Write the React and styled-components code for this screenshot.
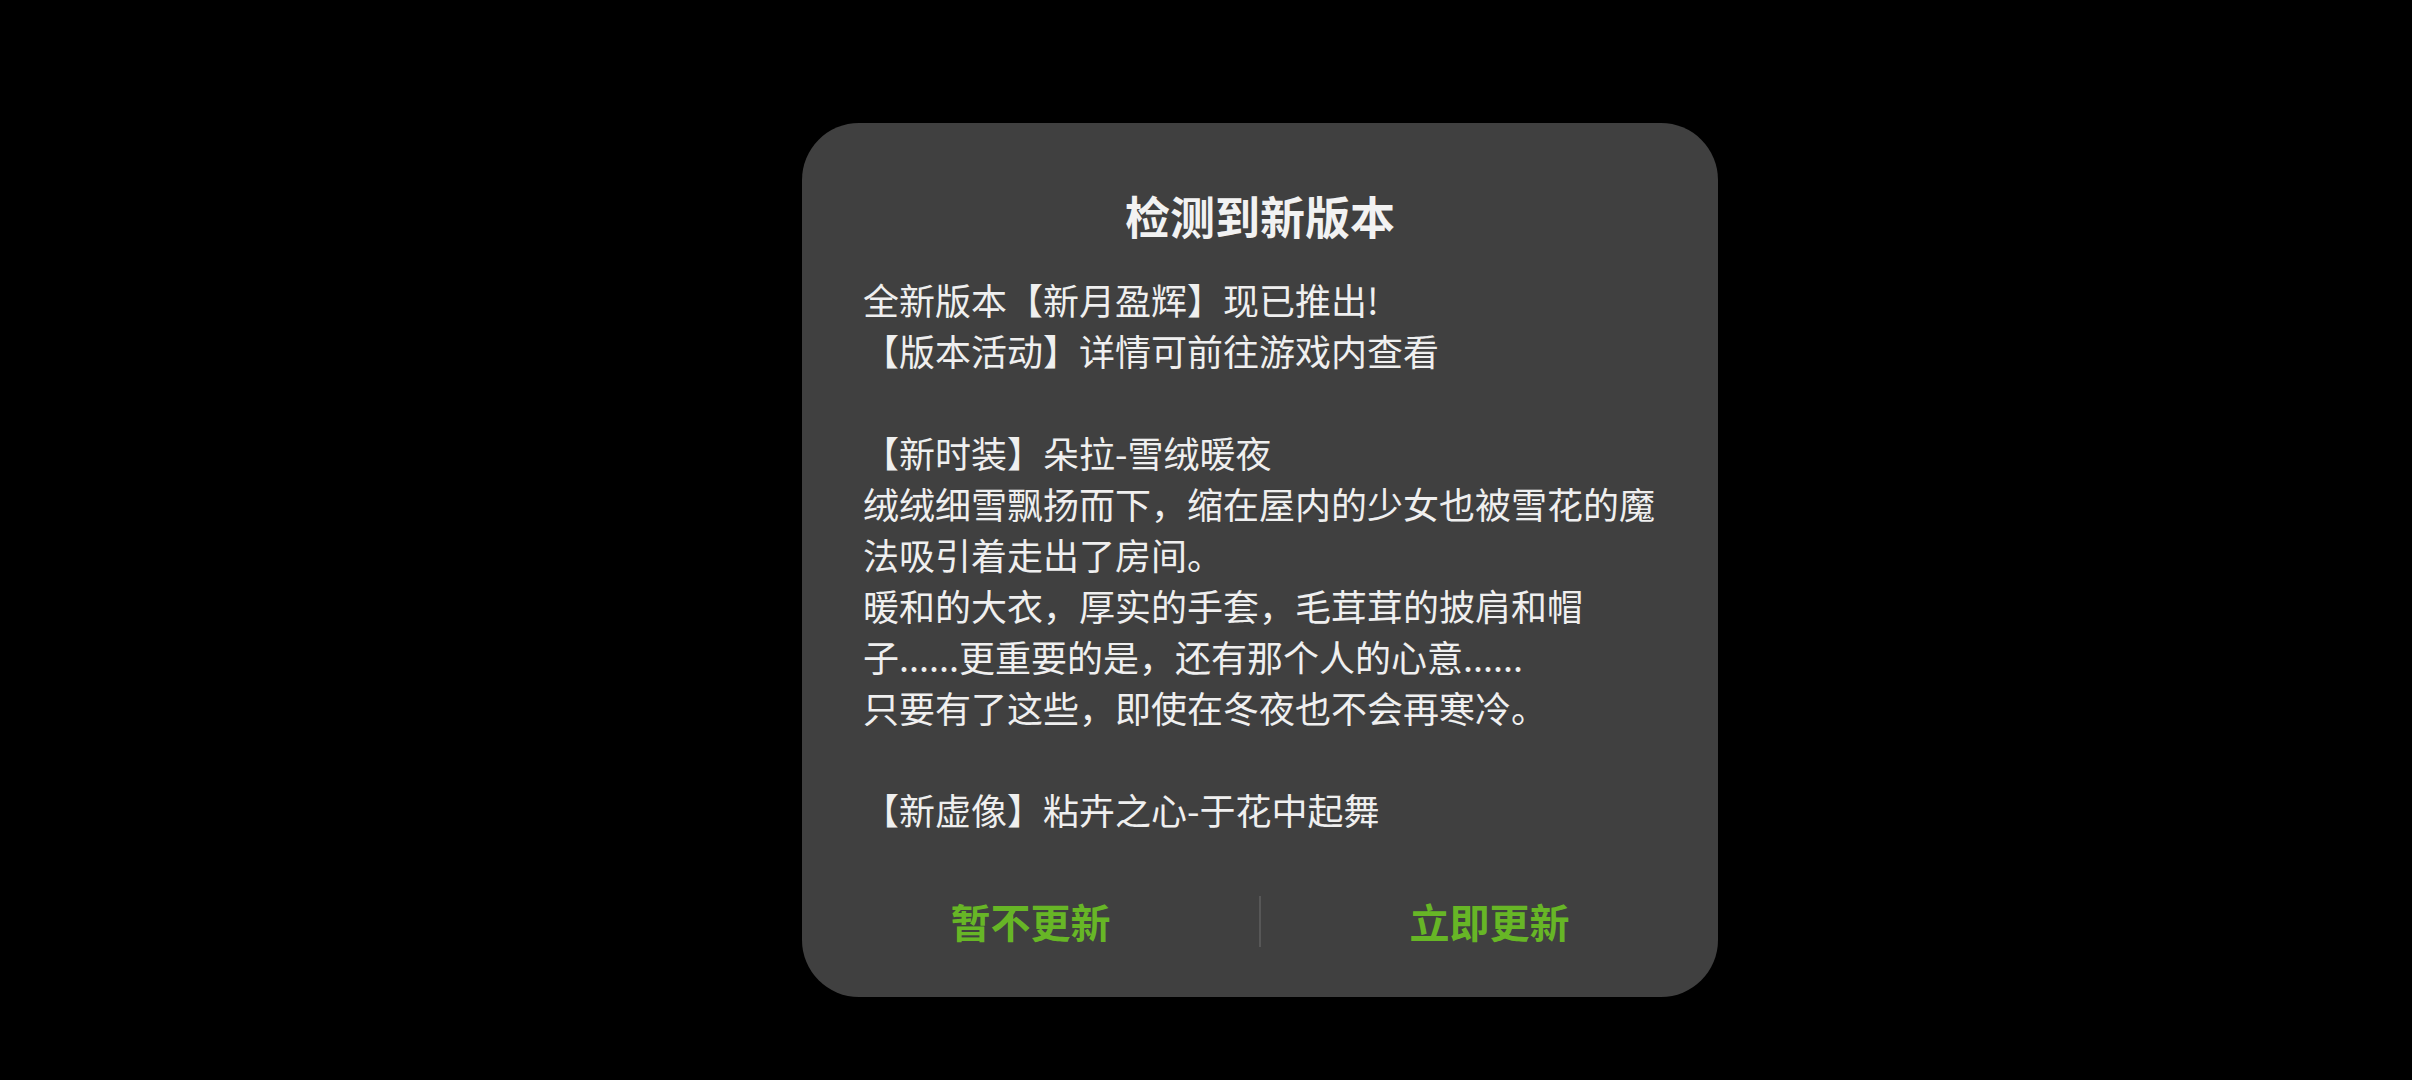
import React from "react";
import styled, { createGlobalStyle } from "styled-components";

const GlobalStyle = createGlobalStyle`
  html, body {
    margin: 0;
    padding: 0;
    background: #000;
  }
  body {
    font-family: "Noto Sans CJK SC", "Noto Sans", sans-serif;
  }
`;

const Page = styled.div`
  width: 2412px;
  height: 1080px;
  box-sizing: border-box;
  padding: 123px 0 0 802px;
  background: #000;
  overflow: hidden;
`;

const Dialog = styled.div`
  width: 916px;
  height: 874px;
  box-sizing: border-box;
  background: #404040;
  border-radius: 57px;
  padding: 63px 61px 26px;
  display: flex;
  flex-direction: column;
`;

const Title = styled.h1`
  margin: 0;
  font-size: 45px;
  line-height: 60px;
  font-weight: 700;
  color: #f2f2f2;
  text-align: center;
`;

const Body = styled.div`
  margin-top: 28px;
  display: flex;
  flex-direction: column;
`;

const Line = styled.div`
  height: 51px;
  line-height: 51px;
  font-size: 36px;
  color: #efefef;
  white-space: nowrap;
`;

const Actions = styled.div`
  margin: auto -61px 0;
  height: 100px;
  display: grid;
  grid-template-columns: 1fr 2px 1fr;
  align-items: center;
`;

const ActionButton = styled.button`
  background: none;
  border: none;
  padding: 0;
  height: 100%;
  font-family: inherit;
  font-size: 40px;
  font-weight: 700;
  color: #67b626;
  cursor: pointer;
`;

const Divider = styled.div`
  width: 2px;
  height: 51px;
  background: #575757;
`;

const lines = [
  "全新版本【新月盈辉】现已推出!",
  "【版本活动】详情可前往游戏内查看",
  "",
  "【新时装】朵拉-雪绒暖夜",
  "绒绒细雪飘扬而下，缩在屋内的少女也被雪花的魔",
  "法吸引着走出了房间。",
  "暖和的大衣，厚实的手套，毛茸茸的披肩和帽",
  "子......更重要的是，还有那个人的心意......",
  "只要有了这些，即使在冬夜也不会再寒冷。",
  "",
  "【新虚像】粘卉之心-于花中起舞",
];

export default function App() {
  return (
    <>
      <GlobalStyle />
      <Page>
        <Dialog>
          <Title>检测到新版本</Title>
          <Body>
            {lines.map((text, i) => (
              <Line key={i}>{text}</Line>
            ))}
          </Body>
          <Actions>
            <ActionButton>暂不更新</ActionButton>
            <Divider />
            <ActionButton>立即更新</ActionButton>
          </Actions>
        </Dialog>
      </Page>
    </>
  );
}
